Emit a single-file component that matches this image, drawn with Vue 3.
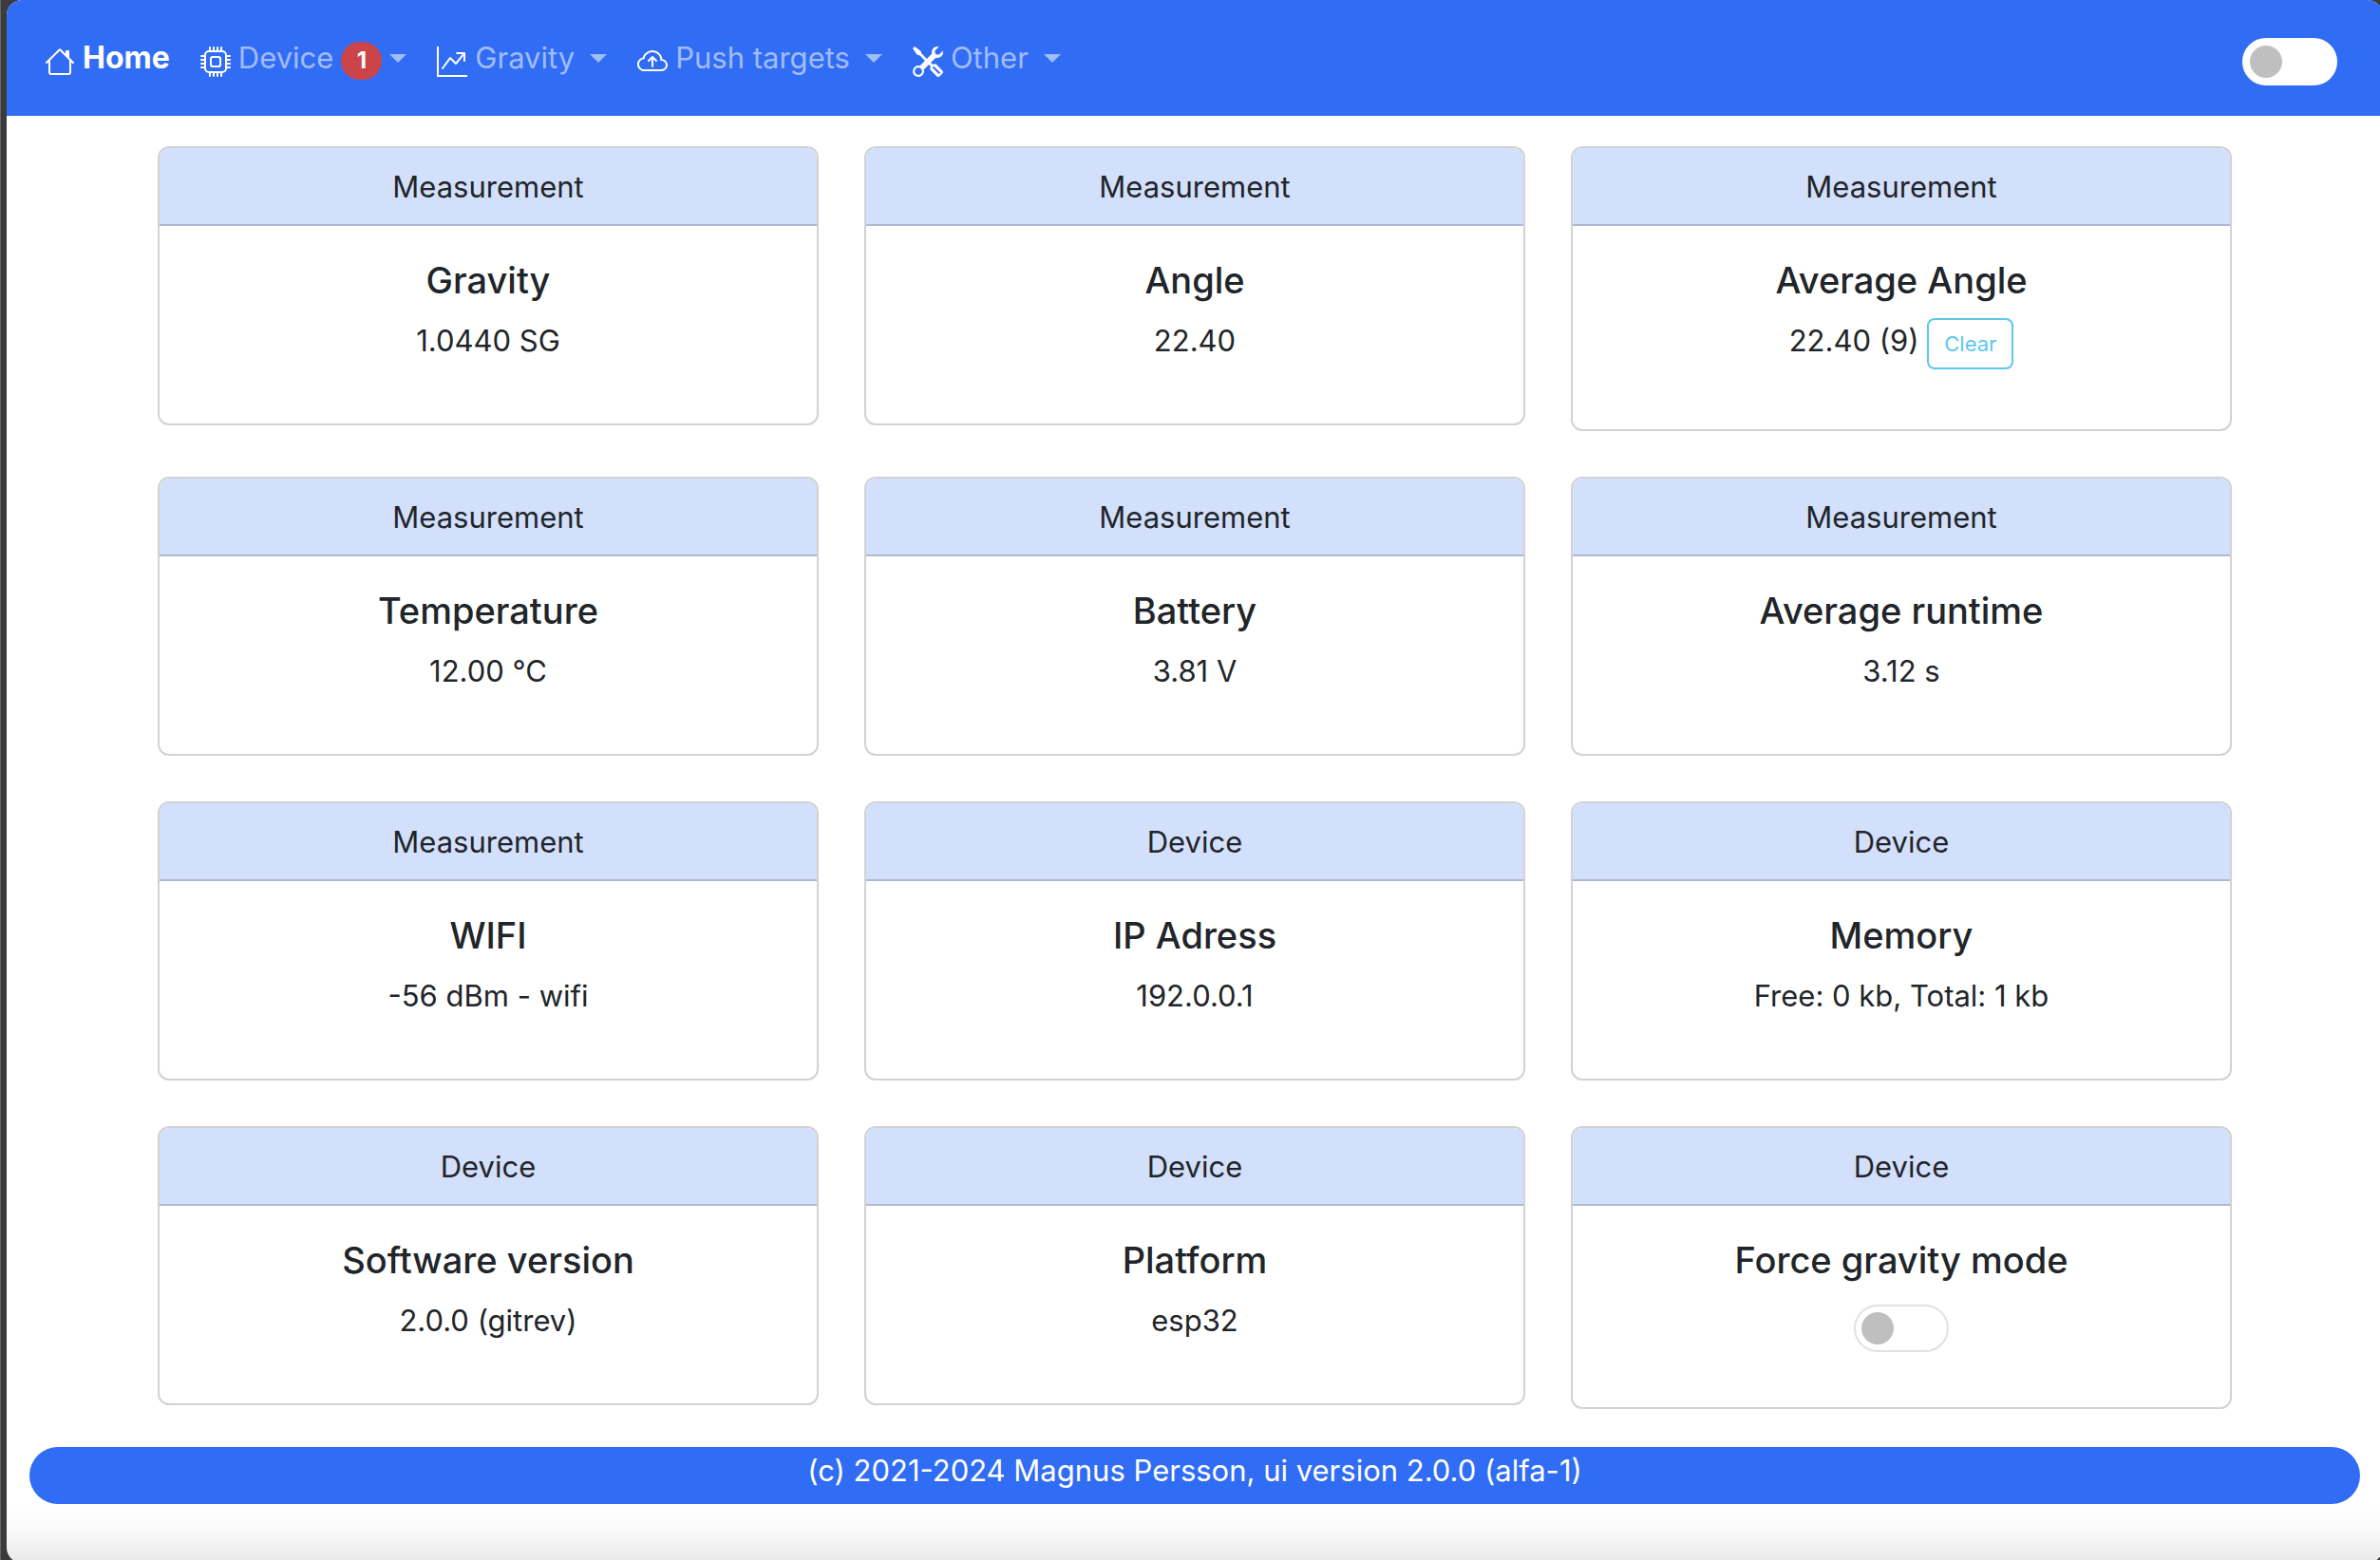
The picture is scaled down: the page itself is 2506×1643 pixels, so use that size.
<script setup>
import { ref } from 'vue'

const icons = {
  house: ['M8.707 1.5a1 1 0 0 0-1.414 0L.646 8.146a.5.5 0 0 0 .708.708L2 8.207V13.5A1.5 1.5 0 0 0 3.5 15h9a1.5 1.5 0 0 0 1.5-1.5V8.207l.646.647a.5.5 0 0 0 .708-.708L13 5.793V2.5a.5.5 0 0 0-.5-.5h-1a.5.5 0 0 0-.5.5v1.293zM13 7.207V13.5a.5.5 0 0 1-.5.5h-9a.5.5 0 0 1-.5-.5V7.207l5-5z'],
  cpu: ['M5 0a.5.5 0 0 1 .5.5V2h1V.5a.5.5 0 0 1 1 0V2h1V.5a.5.5 0 0 1 1 0V2h1V.5a.5.5 0 0 1 1 0V2A2.5 2.5 0 0 1 14 4.5h1.5a.5.5 0 0 1 0 1H14v1h1.5a.5.5 0 0 1 0 1H14v1h1.5a.5.5 0 0 1 0 1H14v1h1.5a.5.5 0 0 1 0 1H14a2.5 2.5 0 0 1-2.5 2.5v1.5a.5.5 0 0 1-1 0V14h-1v1.5a.5.5 0 0 1-1 0V14h-1v1.5a.5.5 0 0 1-1 0V14h-1v1.5a.5.5 0 0 1-1 0V14A2.5 2.5 0 0 1 2 11.5H.5a.5.5 0 0 1 0-1H2v-1H.5a.5.5 0 0 1 0-1H2v-1H.5a.5.5 0 0 1 0-1H2v-1H.5a.5.5 0 0 1 0-1H2A2.5 2.5 0 0 1 4.5 2V.5A.5.5 0 0 1 5 0m-.5 3A1.5 1.5 0 0 0 3 4.5v7A1.5 1.5 0 0 0 4.5 13h7a1.5 1.5 0 0 0 1.5-1.5v-7A1.5 1.5 0 0 0 11.5 3zM5 6.5A1.5 1.5 0 0 1 6.5 5h3A1.5 1.5 0 0 1 11 6.5v3A1.5 1.5 0 0 1 9.5 11h-3A1.5 1.5 0 0 1 5 9.5zM6.5 6a.5.5 0 0 0-.5.5v3a.5.5 0 0 0 .5.5h3a.5.5 0 0 0 .5-.5v-3a.5.5 0 0 0-.5-.5z'],
  graph: ['M0 0h1v15h15v1H0zm10 3.5a.5.5 0 0 1 .5-.5h4a.5.5 0 0 1 .5.5v4a.5.5 0 0 1-1 0V4.9l-3.613 4.417a.5.5 0 0 1-.74.037L7.06 6.767l-3.656 5.027a.5.5 0 0 1-.808-.588l4-5.5a.5.5 0 0 1 .758-.06l2.609 2.61L13.445 4H10.5a.5.5 0 0 1-.5-.5'],
  cloud: [
    'M7.646 5.146a.5.5 0 0 1 .708 0l2 2a.5.5 0 0 1-.708.708L8.5 6.707V10.5a.5.5 0 0 1-1 0V6.707L6.354 7.854a.5.5 0 1 1-.708-.708z',
    'M4.406 3.342A5.53 5.53 0 0 1 8 2c2.69 0 4.923 2 5.166 4.579C14.758 6.804 16 8.137 16 9.773 16 11.569 14.502 13 12.687 13H3.781C1.708 13 0 11.366 0 9.318c0-1.763 1.266-3.223 2.942-3.593.143-.863.698-1.723 1.464-2.383m.653.757c-.757.653-1.153 1.44-1.153 2.056v.448l-.445.049C2.064 6.805 1 7.952 1 9.318 1 10.785 2.23 12 3.781 12h8.906C13.98 12 15 10.988 15 9.773c0-1.216-1.02-2.228-2.313-2.228h-.5v-.5C12.188 4.825 10.328 3 8 3a4.53 4.53 0 0 0-2.941 1.1z',
  ],
  tools: ['M1 0 0 1l2.2 3.081a1 1 0 0 0 .815.419h.07a1 1 0 0 1 .708.293l2.675 2.675-2.617 2.654A3.003 3.003 0 0 0 0 13a3 3 0 1 0 5.878-.851l2.654-2.617.968.968-.305.914a1 1 0 0 0 .242 1.023l3.27 3.27a.997.997 0 0 0 1.414 0l1.586-1.586a.997.997 0 0 0 0-1.414l-3.27-3.27a1 1 0 0 0-1.023-.242L10.5 9.5l-.96-.96 2.68-2.643A3.005 3.005 0 0 0 16 3q0-.405-.102-.777l-2.14 2.141L12 4l-.364-1.757L13.777.102a3 3 0 0 0-3.675 3.68L7.462 6.46 4.793 3.793a1 1 0 0 1-.293-.707v-.071a1 1 0 0 0-.419-.814zm9.646 10.646a.5.5 0 0 1 .708 0l2.914 2.915a.5.5 0 0 1-.707.707l-2.915-2.914a.5.5 0 0 1 0-.708M3 11l.471.242.529.026.287.445.445.287.026.529L5 13l-.242.471-.026.529-.445.287-.287.445-.529.026L3 15l-.471-.242L2 14.732l-.287-.445L1.268 14l-.026-.529L1 13l.242-.471.026-.529.445-.287.287-.445.529-.026z'],
}

const menus = [
  { label: 'Device', icon: 'cpu', badge: 1 },
  { label: 'Gravity', icon: 'graph' },
  { label: 'Push targets', icon: 'cloud' },
  { label: 'Other', icon: 'tools' },
]

const cards = [
  { group: 'Measurement', title: 'Gravity', value: '1.0440 SG' },
  { group: 'Measurement', title: 'Angle', value: '22.40' },
  { group: 'Measurement', title: 'Average Angle', value: '22.40 (9)', clear: true },
  { group: 'Measurement', title: 'Temperature', value: '12.00 °C' },
  { group: 'Measurement', title: 'Battery', value: '3.81 V' },
  { group: 'Measurement', title: 'Average runtime', value: '3.12 s' },
  { group: 'Measurement', title: 'WIFI', value: '-56 dBm - wifi' },
  { group: 'Device', title: 'IP Adress', value: '192.0.0.1' },
  { group: 'Device', title: 'Memory', value: 'Free: 0 kb, Total: 1 kb' },
  { group: 'Device', title: 'Software version', value: '2.0.0 (gitrev)' },
  { group: 'Device', title: 'Platform', value: 'esp32' },
  { group: 'Device', title: 'Force gravity mode', toggle: true },
]

const darkMode = ref(false)
const gravityMode = ref(false)
</script>

<template>
  <div class="window">
    <div class="page">
      <nav class="navbar">
        <a class="nav-link active" href="#">
          <svg class="icon" viewBox="0 0 16 16" aria-hidden="true">
            <path v-for="d in icons.house" :key="d" :d="d" />
          </svg>
          <span>Home</span>
        </a>
        <button v-for="m in menus" :key="m.label" type="button" class="nav-link">
          <svg class="icon" viewBox="0 0 16 16" aria-hidden="true">
            <path v-for="d in icons[m.icon]" :key="d" :d="d" />
          </svg>
          <span>{{ m.label }}</span>
          <span v-if="m.badge" class="badge">{{ m.badge }}</span>
          <span class="caret" :class="{ spaced: !m.badge }"></span>
        </button>
        <input v-model="darkMode" class="switch nav-switch" type="checkbox" role="switch" aria-label="Dark mode" />
      </nav>

      <main class="cards">
        <section v-for="c in cards" :key="c.title" class="card">
          <header class="card-header">{{ c.group }}</header>
          <div class="card-body">
            <h5 class="card-title">{{ c.title }}</h5>
            <div v-if="c.toggle" class="card-switch">
              <input v-model="gravityMode" class="switch" type="checkbox" role="switch" :aria-label="c.title" />
            </div>
            <p v-else class="card-text">
              {{ c.value }}
              <button v-if="c.clear" type="button" class="clear">Clear</button>
            </p>
          </div>
        </section>
      </main>

      <footer class="footer">(c) 2021-2024 Magnus Persson, ui version 2.0.0 (alfa-1)</footer>
    </div>
  </div>
</template>

<style>
body {
  margin: 0;
}
</style>

<style scoped>
* {
  box-sizing: border-box;
}

.window {
  display: flex;
  flex-direction: column;
  min-height: 100vh;
  overflow: hidden;
  background: #3b3b3b;
  border-left: 1px solid #666;
  color: #212529;
  font-family: Inter, "Liberation Sans", sans-serif;
  font-size: 31px;
  line-height: 48px;
}

.page {
  flex: 1;
  margin: 0 -3px -3px 6px;
  border-radius: 16px;
  overflow: hidden;
  background: linear-gradient(to top, #e9e9e9, #f9f9f9 32px, #fff 64px);
}

.navbar {
  display: flex;
  align-items: center;
  gap: 32px;
  height: 122px;
  padding: 0 48px 0 40px;
  background: #316cf4;
}

.nav-link {
  display: flex;
  align-items: center;
  gap: 8px;
  margin: 0;
  padding: 0;
  border: 0;
  background: none;
  color: #a0bcfa;
  font: inherit;
  text-decoration: none;
  white-space: nowrap;
  cursor: pointer;
}

.nav-link.active {
  color: #fff;
  font-size: 32px;
  font-weight: 700;
}

.icon {
  width: 32px;
  height: 32px;
  margin-top: 8px;
  fill: #fff;
}

.badge {
  min-width: 43px;
  height: 40px;
  margin-top: 6px;
  border-radius: 20px;
  background: #cb444a;
  color: #fff;
  font-size: 24px;
  font-weight: 700;
  line-height: 40px;
  text-align: center;
}

.caret {
  border-top: 9px solid currentColor;
  border-right: 9px solid transparent;
  border-left: 9px solid transparent;
}

.caret.spaced {
  margin-left: 8px;
}

.switch {
  appearance: none;
  display: block;
  flex: none;
  width: 100px;
  height: 50px;
  margin: 0;
  padding: 6px;
  border: 2px solid #dee2e6;
  border-radius: 25px;
  background: #fff;
  cursor: pointer;
}

.switch::before {
  content: "";
  display: block;
  width: 34px;
  height: 34px;
  border-radius: 50%;
  background: #bfbfbf;
}

.switch:checked::before {
  margin-left: auto;
  background: #316cf4;
}

.nav-switch {
  margin: 8px 0 0 auto;
  border-color: #fff;
}

.cards {
  display: grid;
  grid-template-columns: repeat(3, 1fr);
  align-items: start;
  gap: 48px;
  max-width: 2184px;
  margin: 32px auto 40px;
}

.card {
  border: 2px solid #d2d2d2;
  border-radius: 12px;
  overflow: hidden;
  background: #fff;
  text-align: center;
}

.card-header {
  padding: 17px 16px 15px;
  border-bottom: 2px solid #afbad2;
  background: #d3e0fc;
}

.card-body {
  padding: 33px 32px 31px;
}

.card-title {
  margin: 0 0 16px;
  font-size: 38px;
  font-weight: 500;
  line-height: 48px;
}

.card-text {
  margin: 0 0 32px;
}

.card-switch {
  display: flex;
  justify-content: center;
  padding: 7px 0 27px;
}

.clear {
  padding: 8px 16px;
  border: 2px solid #5dc8ec;
  border-radius: 8px;
  background: #fff;
  color: #5dc8ec;
  font-family: inherit;
  font-size: 22px;
  line-height: 34px;
  cursor: pointer;
}

.footer {
  margin: 0 24px 60px;
  padding: 1px 0 11px;
  border-radius: 30px;
  background: #316cf4;
  color: #fff;
  text-align: center;
}
</style>
